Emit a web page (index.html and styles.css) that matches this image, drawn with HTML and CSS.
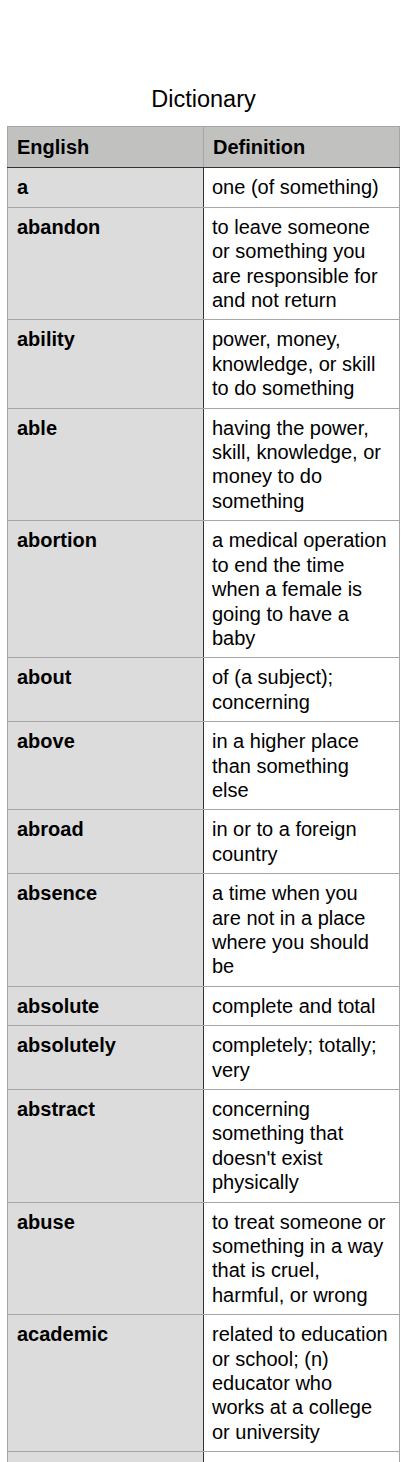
FILE: index.html
```html
<!DOCTYPE html>
<html lang="en">
<head>
<meta charset="utf-8">
<title>Dictionary</title>
<link rel="stylesheet" href="styles.css">
</head>
<body>
<main class="page">
  <table class="dict">
    <caption class="dict-title">Dictionary</caption>
    <thead>
      <tr><th class="head-cell">English</th><th class="head-cell">Definition</th></tr>
    </thead>
    <tbody>
      <tr><th class="word">a</th><td class="def">one (of something)</td></tr>
      <tr><th class="word">abandon</th><td class="def">to leave someone or something you are responsible for and not return</td></tr>
      <tr><th class="word">ability</th><td class="def">power, money, knowledge, or skill to do something</td></tr>
      <tr><th class="word">able</th><td class="def">having the power, skill, knowledge, or money to do something</td></tr>
      <tr><th class="word">abortion</th><td class="def">a medical operation to end the time when a female is going to have a baby</td></tr>
      <tr><th class="word">about</th><td class="def">of (a subject); concerning</td></tr>
      <tr><th class="word">above</th><td class="def">in a higher place than something else</td></tr>
      <tr><th class="word">abroad</th><td class="def">in or to a foreign country</td></tr>
      <tr><th class="word">absence</th><td class="def">a time when you are not in a place where you should be</td></tr>
      <tr><th class="word">absolute</th><td class="def">complete and total</td></tr>
      <tr><th class="word">absolutely</th><td class="def">completely; totally; very</td></tr>
      <tr><th class="word">abstract</th><td class="def">concerning something that doesn't exist physically</td></tr>
      <tr><th class="word">abuse</th><td class="def">to treat someone or something in a way that is cruel, harmful, or wrong</td></tr>
      <tr><th class="word">academic</th><td class="def">related to education or school; (n) educator who works at a college or university</td></tr>
      <tr class="more-row"><th class="word"></th><td class="def"></td></tr>
    </tbody>
  </table>
</main>
</body>
</html>
```

FILE: styles.css
```css
html, body {
  margin: 0;
  padding: 0;
  background: #ffffff;
}

body {
  font-family: "Liberation Sans", Arial, Helvetica, sans-serif;
  color: #000000;
}

.page {
  padding: 85px 0 0 7px;
}

.dict {
  width: 393px;
  table-layout: fixed;
  border-collapse: collapse;
  border: 1px solid #a6a6a6;
  font-size: 20px;
  line-height: 24.4px;
}

.dict-title {
  font-size: 23.5px;
  line-height: 28px;
  font-weight: normal;
  color: #000000;
  padding-bottom: 13px;
  text-align: center;
}

.head-cell {
  background: #c1c2c0;
  font-weight: bold;
  text-align: left;
  padding: 8px 8px 8px 9px;
  border: 1px solid #a6a6a6;
  border-bottom: 1px solid #333333;
  vertical-align: top;
}

.word {
  background: #dcdcdc;
  font-weight: bold;
  text-align: left;
  padding: 7px 8px 7px 9px;
  border-top: 1px solid #a6a6a6;
  border-bottom: 1px solid #a6a6a6;
  border-right: 1px solid #333333;
  vertical-align: top;
}

.def {
  background: #ffffff;
  font-weight: normal;
  text-align: left;
  padding: 7px 10.5px 7px 8px;
  border-top: 1px solid #a6a6a6;
  border-bottom: 1px solid #a6a6a6;
  vertical-align: top;
}

.more-row .word,
.more-row .def {
  height: 40px;
}
```
